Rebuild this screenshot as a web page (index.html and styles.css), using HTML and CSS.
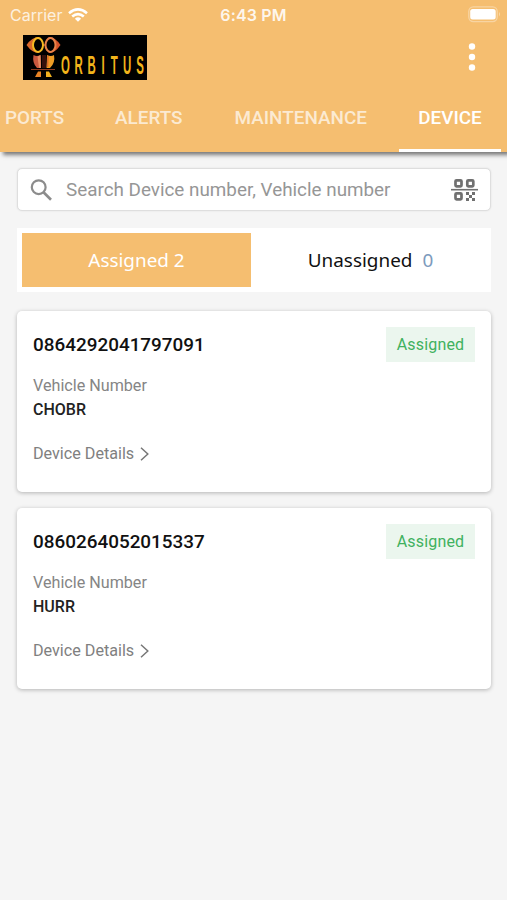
FILE: index.html
```html
<!DOCTYPE html>
<html lang="en">
<head>
<meta charset="utf-8">
<title>Devices</title>
<link rel="stylesheet" href="styles.css">
</head>
<body>
<header class="header">
  <div class="status">
    <div class="carrier"><span>Carrier</span>
      <svg width="20" height="14" viewBox="0 0 20 14" fill="none" stroke="#fff" stroke-width="2.6"><path d="M1 5.2Q10-2.3 19 5.2M4.2 8.6Q10 3.5 15.800 8.600"/><path d="M6.900 10.700Q10 7.900 13.100 10.700L10 13.800Z" fill="#fff" stroke="none"/></svg>
    </div>
    <div class="clock">6:43 PM</div>
    <svg class="battery" width="34" height="18" viewBox="0 0 34 18"><rect x=".8" y=".8" width="28.400" height="14.800" rx="4.500" fill="none" stroke="#fff" stroke-opacity=".35" stroke-width="1.300"/><rect x="2.200" y="3" width="25.500" height="10.500" rx="2.500" fill="#fff"/><path d="M31 6q2 2.200 0 4.500z" fill="#fff" fill-opacity=".4"/></svg>
  </div>
  <div class="brand">
    <svg class="logo" width="124" height="45" viewBox="0 0 124 45">
      <rect width="124" height="45" fill="#000"/>
      <path d="M3.500 10Q9 2 16 2L21 10L16 18Q9 18 3.500 10Z" fill="#d9692c"/>
      <path d="M37.500 10Q32 2 26 2L21 10L26 18Q32 18 37.500 10Z" fill="#d4532b"/>
      <ellipse cx="15" cy="10" rx="5" ry="7" fill="#000" stroke="#f5b921" stroke-width="2"/>
      <ellipse cx="27.500" cy="10" rx="5" ry="7" fill="#000" stroke="#e98249" stroke-width="2"/>
      <path d="M10.500 20Q14 22 17.500 20L18 33H14Q9 28 10.500 20Z" fill="#c9583f"/>
      <path d="M14.500 21.500L17.500 20L18 33H16Z" fill="#e88a60"/>
      <path d="M31 20Q28 22 24 20L23.500 33H27Q32.500 28 31 20Z" fill="#ef9c25"/>
      <path d="M25 21L24.500 32" stroke="#d9692c" stroke-width="1.500"/>
      <path d="M19 20h4v13h-4z" fill="#35100c"/>
      <path d="M8 34.500H32" stroke="#8e3b20"/>
      <path d="M12 42L15 36.500H18V42Z" fill="#e98325"/><path d="M23 42V36.500H26L29 42Z" fill="#f0b01f"/>
      <g class="wordmark" transform="translate(38 38.500) scale(.44 1)"><text x="0 30.500 60.500 92 113 141 171" y="0">ORBITUS</text></g>
    </svg>
    <svg class="more" width="8" height="30" viewBox="0 0 8 30" fill="#fff"><circle cx="4" cy="4.500" r="3.200"/><circle cx="4" cy="15" r="3.200"/><circle cx="4" cy="25.500" r="3.200"/></svg>
  </div>
  <nav class="tabs">
    <span class="tab reports">PORTS</span><span class="tab alerts">ALERTS</span><span class="tab maintenance">MAINTENANCE</span><span class="tab active">DEVICE</span>
  </nav>
</header>
<main class="content">
  <div class="search">
    <svg width="22" height="22" viewBox="0 0 22 22" fill="none" stroke="#8c8c8c"><circle cx="8.700" cy="8.200" r="6.900" stroke-width="2.200"/><path d="M13.500 13.200L21 20.800" stroke-width="2.700"/></svg>
    <span class="placeholder">Search Device number, Vehicle number</span>
    <svg class="qr" width="27" height="24" viewBox="0 0 27 24" fill="none" stroke="#707070" stroke-width="2.700"><rect x="4.500" y="2.300" width="6" height="6" rx="1"/><rect x="16.300" y="2.300" width="6" height="6" rx="1"/><rect x="4.500" y="15.300" width="6" height="6" rx="1"/><path d="M0 11.700H27" stroke-width="1.600"/><path d="M15 14h3v3h-3zM21 14h3v3h-3zM18 17h3v3h-3zM15 20h3v3h-3zM21 20h3v3h-3z" fill="#707070" stroke="none"/></svg>
  </div>
  <div class="switch">
    <div class="option selected">Assigned 2</div>
    <div class="option">Unassigned<span class="count">0</span></div>
  </div>
  <article class="card">
    <div class="card-head"><h2>0864292041797091</h2><span class="badge">Assigned</span></div>
    <div class="label">Vehicle Number</div>
    <div class="value">CHOBR</div>
    <div class="details">Device Details<svg width="9" height="14" viewBox="0 0 9 14" fill="none" stroke="#777" stroke-width="1.500"><path d="M1 .8L7.800 7L1 13.200"/></svg></div>
  </article>
  <article class="card">
    <div class="card-head"><h2>0860264052015337</h2><span class="badge">Assigned</span></div>
    <div class="label">Vehicle Number</div>
    <div class="value">HURR</div>
    <div class="details">Device Details<svg width="9" height="14" viewBox="0 0 9 14" fill="none" stroke="#777" stroke-width="1.500"><path d="M1 .8L7.800 7L1 13.200"/></svg></div>
  </article>
</main>
</body>
</html>
```
FILE: styles.css
```css
* { box-sizing: border-box; }
body { margin: 0; height: 900px; overflow: hidden; background: #f5f5f5; font-family: Roboto, sans-serif; }
svg { display: block; flex: none; }
.header { height: 152px; background: #f5be70; color: #fff; box-shadow: 3px 3px 4px rgba(0,0,0,.5); }
.status { height: 30px; display: grid; grid-template-columns: 1fr auto 1fr; align-items: center; padding: 0 5px 0 10px; font: 16px/30px Inter, sans-serif; }
.carrier { display: flex; align-items: center; gap: 6px; color: rgba(255,255,255,.8); }
.clock { margin-left: -5px; font-weight: 600; font-size: 16px; letter-spacing: .15px; color: rgba(255,255,255,.9); }
.battery { justify-self: end; }
.brand { height: 55px; display: flex; justify-content: space-between; align-items: flex-start; padding: 5px 31px 0 23px; }
.more { margin-top: 7px; }
.wordmark { font: 700 26px "Liberation Sans", sans-serif; fill: #f2b41b; }
.tabs { height: 67px; display: flex; padding-left: 5px; font-size: 18.9px; font-weight: 500; line-height: 65px; color: rgba(255,255,255,.7); white-space: nowrap; }
.reports { width: 110px; }
.alerts { width: 119.5px; }
.maintenance { width: 164.5px; }
.active { width: 102px; text-align: center; color: #fff; border-bottom: 3px solid #fff; }
.content { padding: 16px 16px 0 17px; }
.search { height: 43px; display: flex; align-items: center; padding: 0 12px; background: #fff; border: 1px solid #dedede; border-radius: 5px; box-shadow: 0 0 2px rgba(0,0,0,.1); }
.placeholder { flex: 1; margin-left: 14px; font-size: 18.85px; color: #969696; white-space: nowrap; }
.switch { display: grid; grid-template-columns: 229px 1fr; height: 64px; margin: 17px 0 19px; padding: 5px; background: #fff; }
.option { display: flex; align-items: center; justify-content: center; font: 18.9px "Noto Sans", sans-serif; color: #111; }
.option:last-child { padding-left: 4px; }
.selected { background: #f5be70; color: #fff; }
.count { margin-left: 10px; color: #7d9bbd; }
.card { height: 181px; margin-bottom: 16px; padding: 16px; background: #fff; border-radius: 5px; box-shadow: 0 1px 4px rgba(0,0,0,.27); }
.card-head { display: flex; justify-content: space-between; align-items: center; height: 35px; }
h2 { margin: 0; font-size: 18.9px; font-weight: 500; color: #111; }
.badge { width: 89px; height: 35px; line-height: 35px; text-align: center; font-size: 16px; letter-spacing: .18px; color: #40b15e; background: #ebf6ee; }
.label { margin-top: 12px; font-size: 16.15px; line-height: 24px; color: #858585; }
.value { font-size: 16px; font-weight: 500; line-height: 24px; color: #222; }
.details { display: flex; align-items: center; gap: 6px; margin-top: 21px; font-size: 16.15px; line-height: 22px; color: #808080; }
```
